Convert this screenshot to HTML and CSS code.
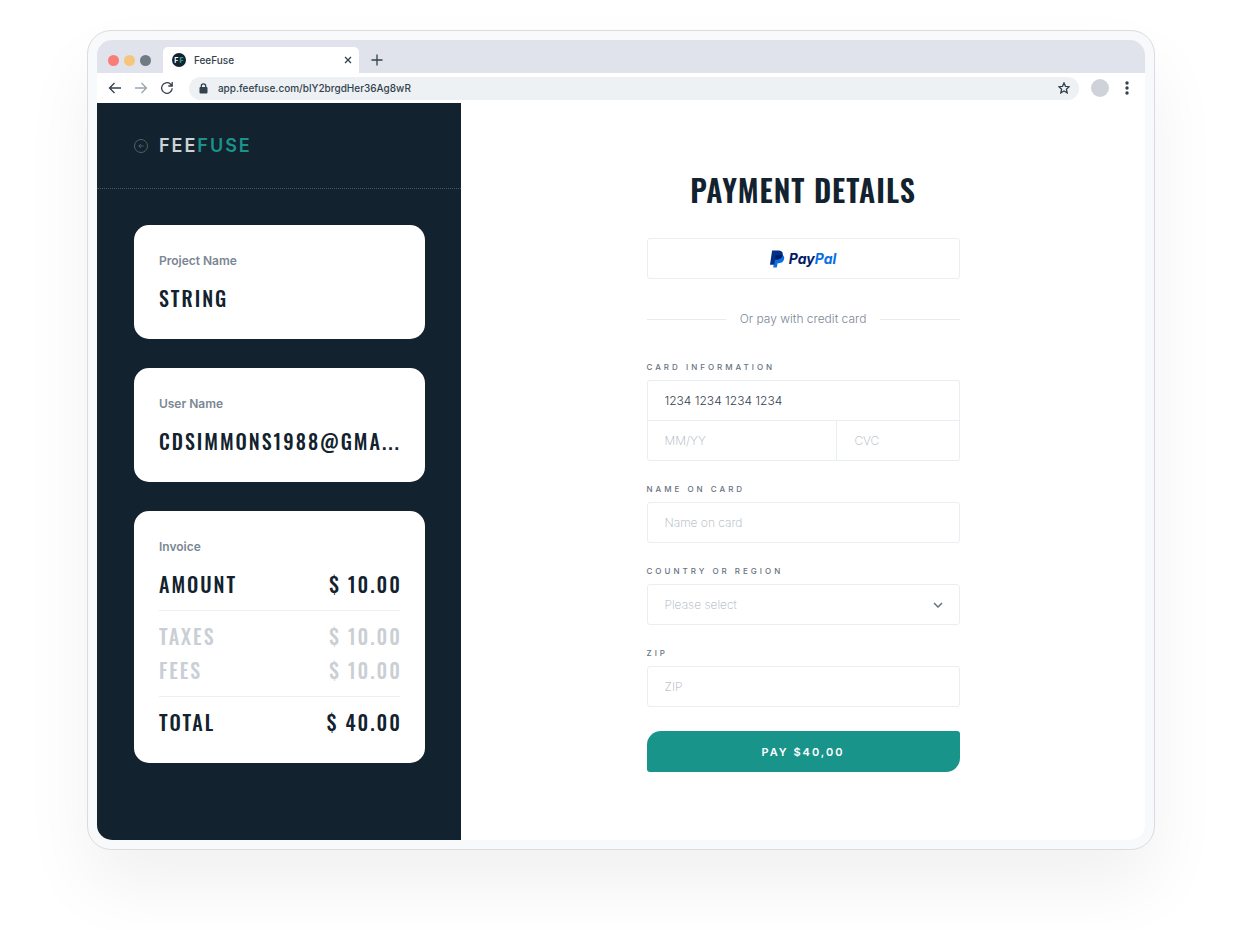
FILE: index.html
```html
<!DOCTYPE html>
<html lang="en">
<head>
    <meta charset="UTF-8">
    <meta name="viewport" content="width=device-width, initial-scale=1.0">
    <title>FeeFuse</title>
    <link rel="stylesheet" href="styles.css">
</head>
<body>
    <div class="browser">
        <div class="window">
            <div class="tabs">
                <span class="dot red"></span>
                <span class="dot yellow"></span>
                <span class="dot gray"></span>
                <div class="tab">
                    <span class="favicon">F<b>F</b></span>
                    <span class="tab-title">FeeFuse</span>
                    <button class="icon" type="button" aria-label="Close tab">
                        <svg width="8" height="8" viewBox="0 0 8 8"><path d="M1 1l6 6M7 1L1 7"/></svg>
                    </button>
                </div>
                <button class="icon new-tab" type="button" aria-label="New tab">
                    <svg width="12" height="12" viewBox="0 0 12 12"><path d="M6 .5v11M.5 6h11"/></svg>
                </button>
            </div>
            <div class="toolbar">
                <button class="icon" type="button" aria-label="Back">
                    <svg width="14" height="14" viewBox="0 0 14 14"><path d="M13 7H1.5M6.5 2l-5 5 5 5"/></svg>
                </button>
                <button class="icon off" type="button" aria-label="Forward">
                    <svg width="14" height="14" viewBox="0 0 14 14"><path d="M1 7h11.5M7.500 2l5 5-5 5"/></svg>
                </button>
                <button class="icon" type="button" aria-label="Reload">
                    <svg width="14" height="14" viewBox="0 0 14 14"><path d="M12.200 7.200A5.300 5.300 0 1 1 10.400 3L12 4.600M12.200 1v4H8.300"/></svg>
                </button>
                <div class="address">
                    <svg class="lock" width="9" height="11" viewBox="0 0 9 11"><rect x="0.500" y="4" width="8" height="6.500" rx="1"/><path d="M2.300 4.500V3a2.200 2.200 0 0 1 4.400 0v1.500"/></svg>
                    <input type="text" value="app.feefuse.com/blY2brgdHer36Ag8wR" aria-label="Address">
                    <button class="icon" type="button" aria-label="Bookmark">
                        <svg width="12" height="12" viewBox="0 0 12 12"><path d="M6 .9l1.500 3.400 3.700.4-2.800 2.500.8 3.700L6 9l-3.200 1.900.8-3.700L.8 4.700l3.700-.4z"/></svg>
                    </button>
                </div>
                <span class="avatar"></span>
                <button class="icon menu" type="button" aria-label="Menu">
                    <svg width="4" height="14" viewBox="0 0 4 14"><circle cx="2" cy="2" r="1.700"/><circle cx="2" cy="7" r="1.700"/><circle cx="2" cy="12" r="1.700"/></svg>
                </button>
            </div>
            <div class="page">
                <aside class="sidebar">
                    <header class="brand">
                        <a href="#" aria-label="Go back">
                            <svg width="14" height="14" viewBox="0 0 14 14"><circle cx="7" cy="7" r="6.500"/><path d="M9.500 7H4.800M6.800 5l-2 2 2 2"/></svg>
                        </a>
                        <span class="logo">FEE<b>FUSE</b></span>
                    </header>
                    <div class="cards">
                        <section class="card">
                            <h2>Project Name</h2>
                            <p class="value">STRING</p>
                        </section>
                        <section class="card">
                            <h2>User Name</h2>
                            <p class="value">CDSIMMONS1988@GMA...</p>
                        </section>
                        <section class="card">
                            <h2>Invoice</h2>
                            <dl>
                                <div class="line"><dt>AMOUNT</dt><dd>$ 10.00</dd></div>
                            </dl>
                            <dl class="extra">
                                <div class="line"><dt>TAXES</dt><dd>$ 10.00</dd></div>
                                <div class="line"><dt>FEES</dt><dd>$ 10.00</dd></div>
                            </dl>
                            <dl>
                                <div class="line"><dt>TOTAL</dt><dd>$ 40.00</dd></div>
                            </dl>
                        </section>
                    </div>
                </aside>
                <main>
                    <form action="#">
                        <h1>PAYMENT DETAILS</h1>
                        <button class="paypal" type="button">
                            <svg width="15" height="18" viewBox="0 0 15 18">
                                <path fill="#0b6fe0" d="M5 5h7.600c1.400.9 1.900 2.300 1.500 4.100-.6 2.900-2.600 4.100-5.200 4.100H7.600l-.8 4.400H3.200z"/>
                                <path fill="#032f86" d="M2.100.4h6.300c3.200 0 5 1.700 4.300 4.700-.7 3-2.800 4.400-5.800 4.400H5.100l-.9 5.200H0z"/>
                                <path fill="#001c64" d="M5.700 5.100h7c-.7 3-2.800 4.400-5.800 4.400H5.100z"/>
                            </svg>
                            <span>Pay<b>Pal</b></span>
                        </button>
                        <div class="divider">Or pay with credit card</div>
                        <div class="field">
                            <label for="card">CARD INFORMATION</label>
                            <div class="card-info">
                                <input class="number" id="card" type="text" value="1234 1234 1234 1234">
                                <input class="expiry" type="text" placeholder="MM/YY" aria-label="Expiry date">
                                <input class="cvc" type="text" placeholder="CVC" aria-label="CVC">
                            </div>
                        </div>
                        <div class="field">
                            <label for="name">NAME ON CARD</label>
                            <input id="name" type="text" placeholder="Name on card">
                        </div>
                        <div class="field">
                            <label for="country">COUNTRY OR REGION</label>
                            <select id="country">
                                <option selected="selected">Please select</option>
                                <option>Canada</option>
                                <option>United States</option>
                            </select>
                        </div>
                        <div class="field">
                            <label for="zip">ZIP</label>
                            <input id="zip" type="text" placeholder="ZIP">
                        </div>
                        <button class="pay" type="submit">PAY $40,00</button>
                    </form>
                </main>
            </div>
        </div>
    </div>
</body>
</html>
```
FILE: styles.css
```css
* {box-sizing: border-box;}
body {margin: 0; padding: 30px 7% 81px; background: white; color: #12222e; font-family: Inter, "Liberation Sans", sans-serif; font-size: 12px;}
h1, h2, p, dl, dd {margin: 0;}
button, input, select {font: inherit; color: inherit;}
button {cursor: pointer;}
svg {display: block; flex: none;}

/* browser frame */
.browser {padding: 9px; border: 1px solid #d9dde2; border-radius: 24px; background: #f7f9fb; box-shadow: 0 36px 70px rgba(0, 0, 0, 0.06);}
.window {border-radius: 15px; overflow: hidden; background: white;}
.tabs {display: flex; align-items: center; height: 33px; padding: 7px 0 0 11px; background: #e0e3eb;}
.dot {width: 11px; height: 11px; margin-right: 5px; border-radius: 50%;}
.red {background: #f87c78;}
.yellow {background: #f5c57c;}
.gray {background: #6f7a84;}
.tab {display: flex; align-items: center; width: 196px; height: 26px; margin: 0 12px 0 7px; padding: 0 7px 0 9px; border-radius: 5px 5px 0 0; background: white;}
.favicon {display: flex; align-items: center; justify-content: center; gap: 1px; width: 14px; height: 14px; border-radius: 50%; background: #12222e; color: white; font-size: 7px; font-weight: 700;}
.favicon b {color: #1a9e93;}
.tab-title {flex: 1; margin-left: 8px; color: #33414d; font-size: 10px; font-weight: 500;}
.icon {padding: 0; border: 0; background: none;}
.icon path {fill: none; stroke: #33414d; stroke-width: 1.3;}
.off path {stroke: #9aa4ad;}
.menu circle {fill: #33414d;}
.toolbar {display: flex; align-items: center; gap: 12px; height: 30px; padding: 0 16px 0 11px;}
.address {display: flex; flex: 1; align-items: center; height: 23px; margin-left: 3px; padding: 0 9px 0 10px; border-radius: 12px; background: #edf1f4;}
.address input {flex: 1; min-width: 0; margin-left: 10px; padding: 0; border: 0; outline: 0; background: none; color: #33414d; font-size: 10px; font-weight: 500;}
.lock rect {fill: #33414d;}
.lock path {fill: none; stroke: #33414d; stroke-width: 1.3;}
.avatar {width: 18px; height: 18px; margin-right: 4px; border-radius: 50%; background: #cfd3d9;}

.page {display: grid; grid-template-columns: 364px 1fr;}

/* sidebar */
.sidebar {background: #12222e;}
.brand {display: flex; align-items: center; gap: 11px; height: 86px; padding-left: 37px; border-bottom: 1px dotted #4a5762;}
.brand svg {fill: none; stroke: #53606a;}
.logo {color: #ced2d6; font-size: 18px; font-weight: 600; letter-spacing: 2px;}
.logo b {color: #1a948b; font-weight: 600;}
.cards {display: grid; gap: 29px; padding: 36px 36px 75px 37px;}
.card {min-width: 0; padding: 24px 25px; border-radius: 15px; background: white;}
.card h2 {margin-bottom: 8px; color: #7b8794; font-size: 12px; font-weight: 600; line-height: 24px;}
.value, .line {font-family: Oswald, "Liberation Sans Narrow", sans-serif; font-size: 20px; font-weight: 500; letter-spacing: 2px; line-height: 34px;}
.value {white-space: nowrap;}
.line {display: flex; justify-content: space-between;}
.line dd {margin-right: -2px;}
.card dl + dl {margin-top: 9px; padding-top: 8px; border-top: 1px solid #edf0f2;}
.extra {color: #c9cfd5;}

/* payment form */
main {padding: 63px 24px 68px;}
form {max-width: 313px; margin: 0 auto;}
h1 {margin-bottom: 24px; font-family: Oswald, "Liberation Sans Narrow", sans-serif; font-size: 30px; font-weight: 600; letter-spacing: 1px; line-height: 48px; text-align: center; white-space: nowrap;}
.paypal {display: flex; align-items: center; justify-content: center; gap: 4px; width: 100%; height: 41px; border: 1px solid #e9eef3; border-radius: 3px; background: white; color: #001c64; font-size: 14px; font-style: italic; font-weight: 700;}
.paypal b {color: #0b6fe0; font-weight: 700;}
.divider {display: flex; align-items: center; gap: 14px; margin: 30px 0 32px; color: #7b8794; font-weight: 300; line-height: 20px;}
.divider::before, .divider::after {content: ""; flex: 1; height: 1px; background: #e5ebf1;}
.field {margin-bottom: 22px;}
label {display: block; margin-bottom: 7px; color: #66727f; font-size: 8px; font-weight: 500; letter-spacing: 3px; line-height: 12px;}
.field input, .field select {display: block; width: 100%; height: 41px; padding: 0 17px; border: 1px solid #e9eef3; border-radius: 3px; background: white; color: #33414d; font-weight: 300;}
.field input::placeholder {color: #a9b1bb; font-weight: 200; opacity: 1;}
.card-info {display: grid; grid-template-columns: 61% 1fr;}
.field .number {grid-column: span 2; height: 40px; border-bottom: 0; border-radius: 3px 3px 0 0;}
.field .expiry {border-radius: 0 0 0 3px;}
.field .cvc {border-left: 0; border-radius: 0 0 3px 0;}
.field select {appearance: none; background: white url("data:image/svg+xml,%3Csvg xmlns='http://www.w3.org/2000/svg' width='10' height='6' fill='none' stroke='%2366727f' stroke-width='1.500'%3E%3Cpath d='M1 1l4 4 4-4'/%3E%3C/svg%3E") no-repeat right 16px center; color: #a9b1bb; font-weight: 200;}
.pay {display: block; width: 100%; height: 41px; margin-top: 24px; border: 0; border-radius: 14px 3px; background: #19948b; color: white; font-size: 11px; font-weight: 600; letter-spacing: 2px;}
```
